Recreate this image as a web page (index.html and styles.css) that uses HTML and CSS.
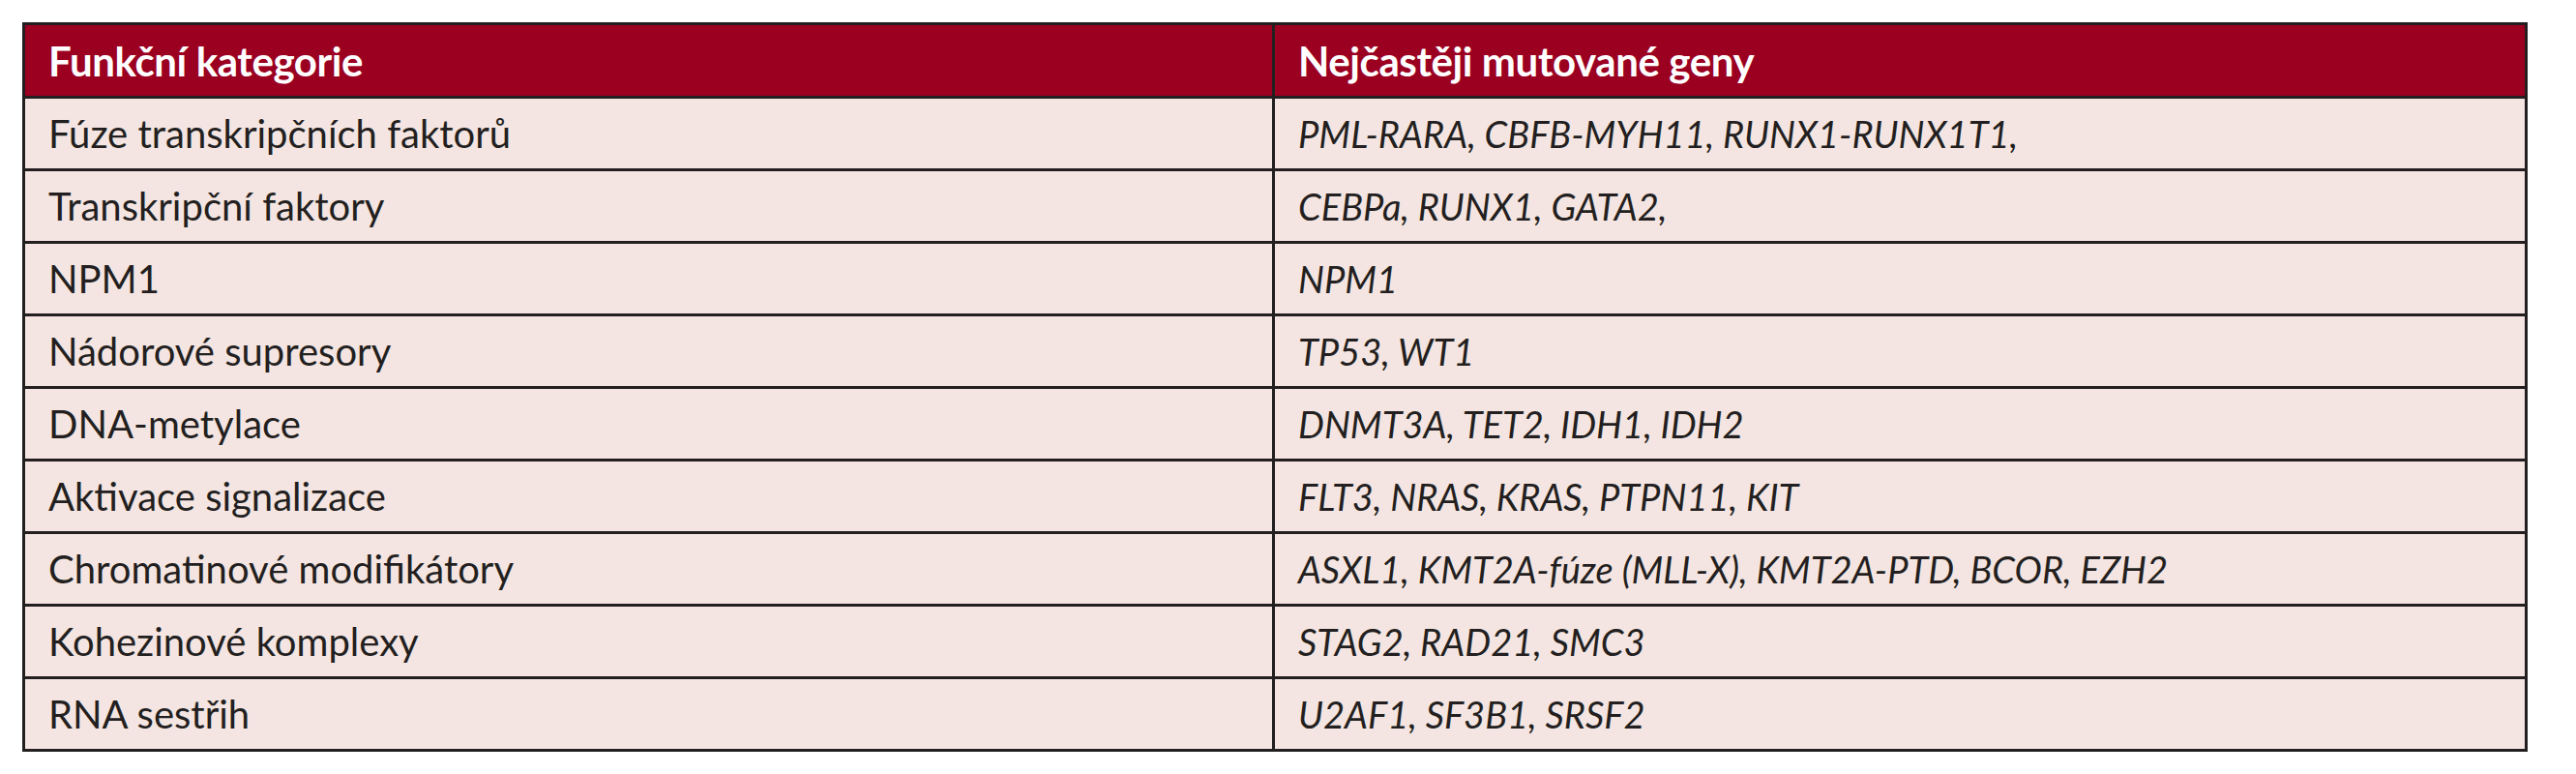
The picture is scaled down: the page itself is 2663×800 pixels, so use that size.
FILE: index.html
```html
<!DOCTYPE html>
<html lang="cs">
<head>
<meta charset="utf-8">
<title>Funkční kategorie</title>
<link rel="stylesheet" href="styles.css">
</head>
<body>
<table class="genes">
  <colgroup>
    <col class="col-cat">
    <col class="col-genes">
  </colgroup>
  <thead>
    <tr>
      <th>Funkční kategorie</th>
      <th>Nejčastěji mutované geny</th>
    </tr>
  </thead>
  <tbody>
    <tr><td>Fúze transkripčních faktorů</td><td class="g">PML-RARA, CBFB-MYH11, RUNX1-RUNX1T1,</td></tr>
    <tr><td>Transkripční faktory</td><td class="g">CEBPa, RUNX1, GATA2,</td></tr>
    <tr><td>NPM1</td><td class="g">NPM1</td></tr>
    <tr><td>Nádorové supresory</td><td class="g">TP53, WT1</td></tr>
    <tr><td>DNA-metylace</td><td class="g">DNMT3A, TET2, IDH1, IDH2</td></tr>
    <tr><td>Aktivace signalizace</td><td class="g">FLT3, NRAS, KRAS, PTPN11, KIT</td></tr>
    <tr><td>Chromatinové modifikátory</td><td class="g">ASXL1, KMT2A-fúze (MLL-X), KMT2A-PTD, BCOR, EZH2</td></tr>
    <tr><td>Kohezinové komplexy</td><td class="g">STAG2, RAD21, SMC3</td></tr>
    <tr><td>RNA sestřih</td><td class="g">U2AF1, SF3B1, SRSF2</td></tr>
  </tbody>
</table>
</body>
</html>
```

FILE: styles.css
```css
html, body {
  margin: 0;
  padding: 0;
  background: #ffffff;
}

body {
  padding: 23px 0 0 23px;
  font-family: "Lato", "Liberation Sans", sans-serif;
}

.genes {
  width: 2590px;
  border-collapse: collapse;
  table-layout: fixed;
  border: 3px solid #231f20;
}

.col-cat {
  width: 1292px;
}

.genes th,
.genes td {
  text-align: left;
  padding: 0 0 0 24px;
  border: 3px solid #231f20;
  vertical-align: middle;
  white-space: nowrap;
}

.genes th {
  height: 73px;
  background: #9b0021;
  color: #ffffff;
  font-weight: 700;
  font-size: 42px;
  letter-spacing: -0.4px;
}

.genes td {
  height: 72px;
  background: #f4e5e2;
  color: #231f20;
  font-size: 40px;
  font-weight: 400;
}

.genes td.g {
  font-style: italic;
  font-size: 38px;
}
```
